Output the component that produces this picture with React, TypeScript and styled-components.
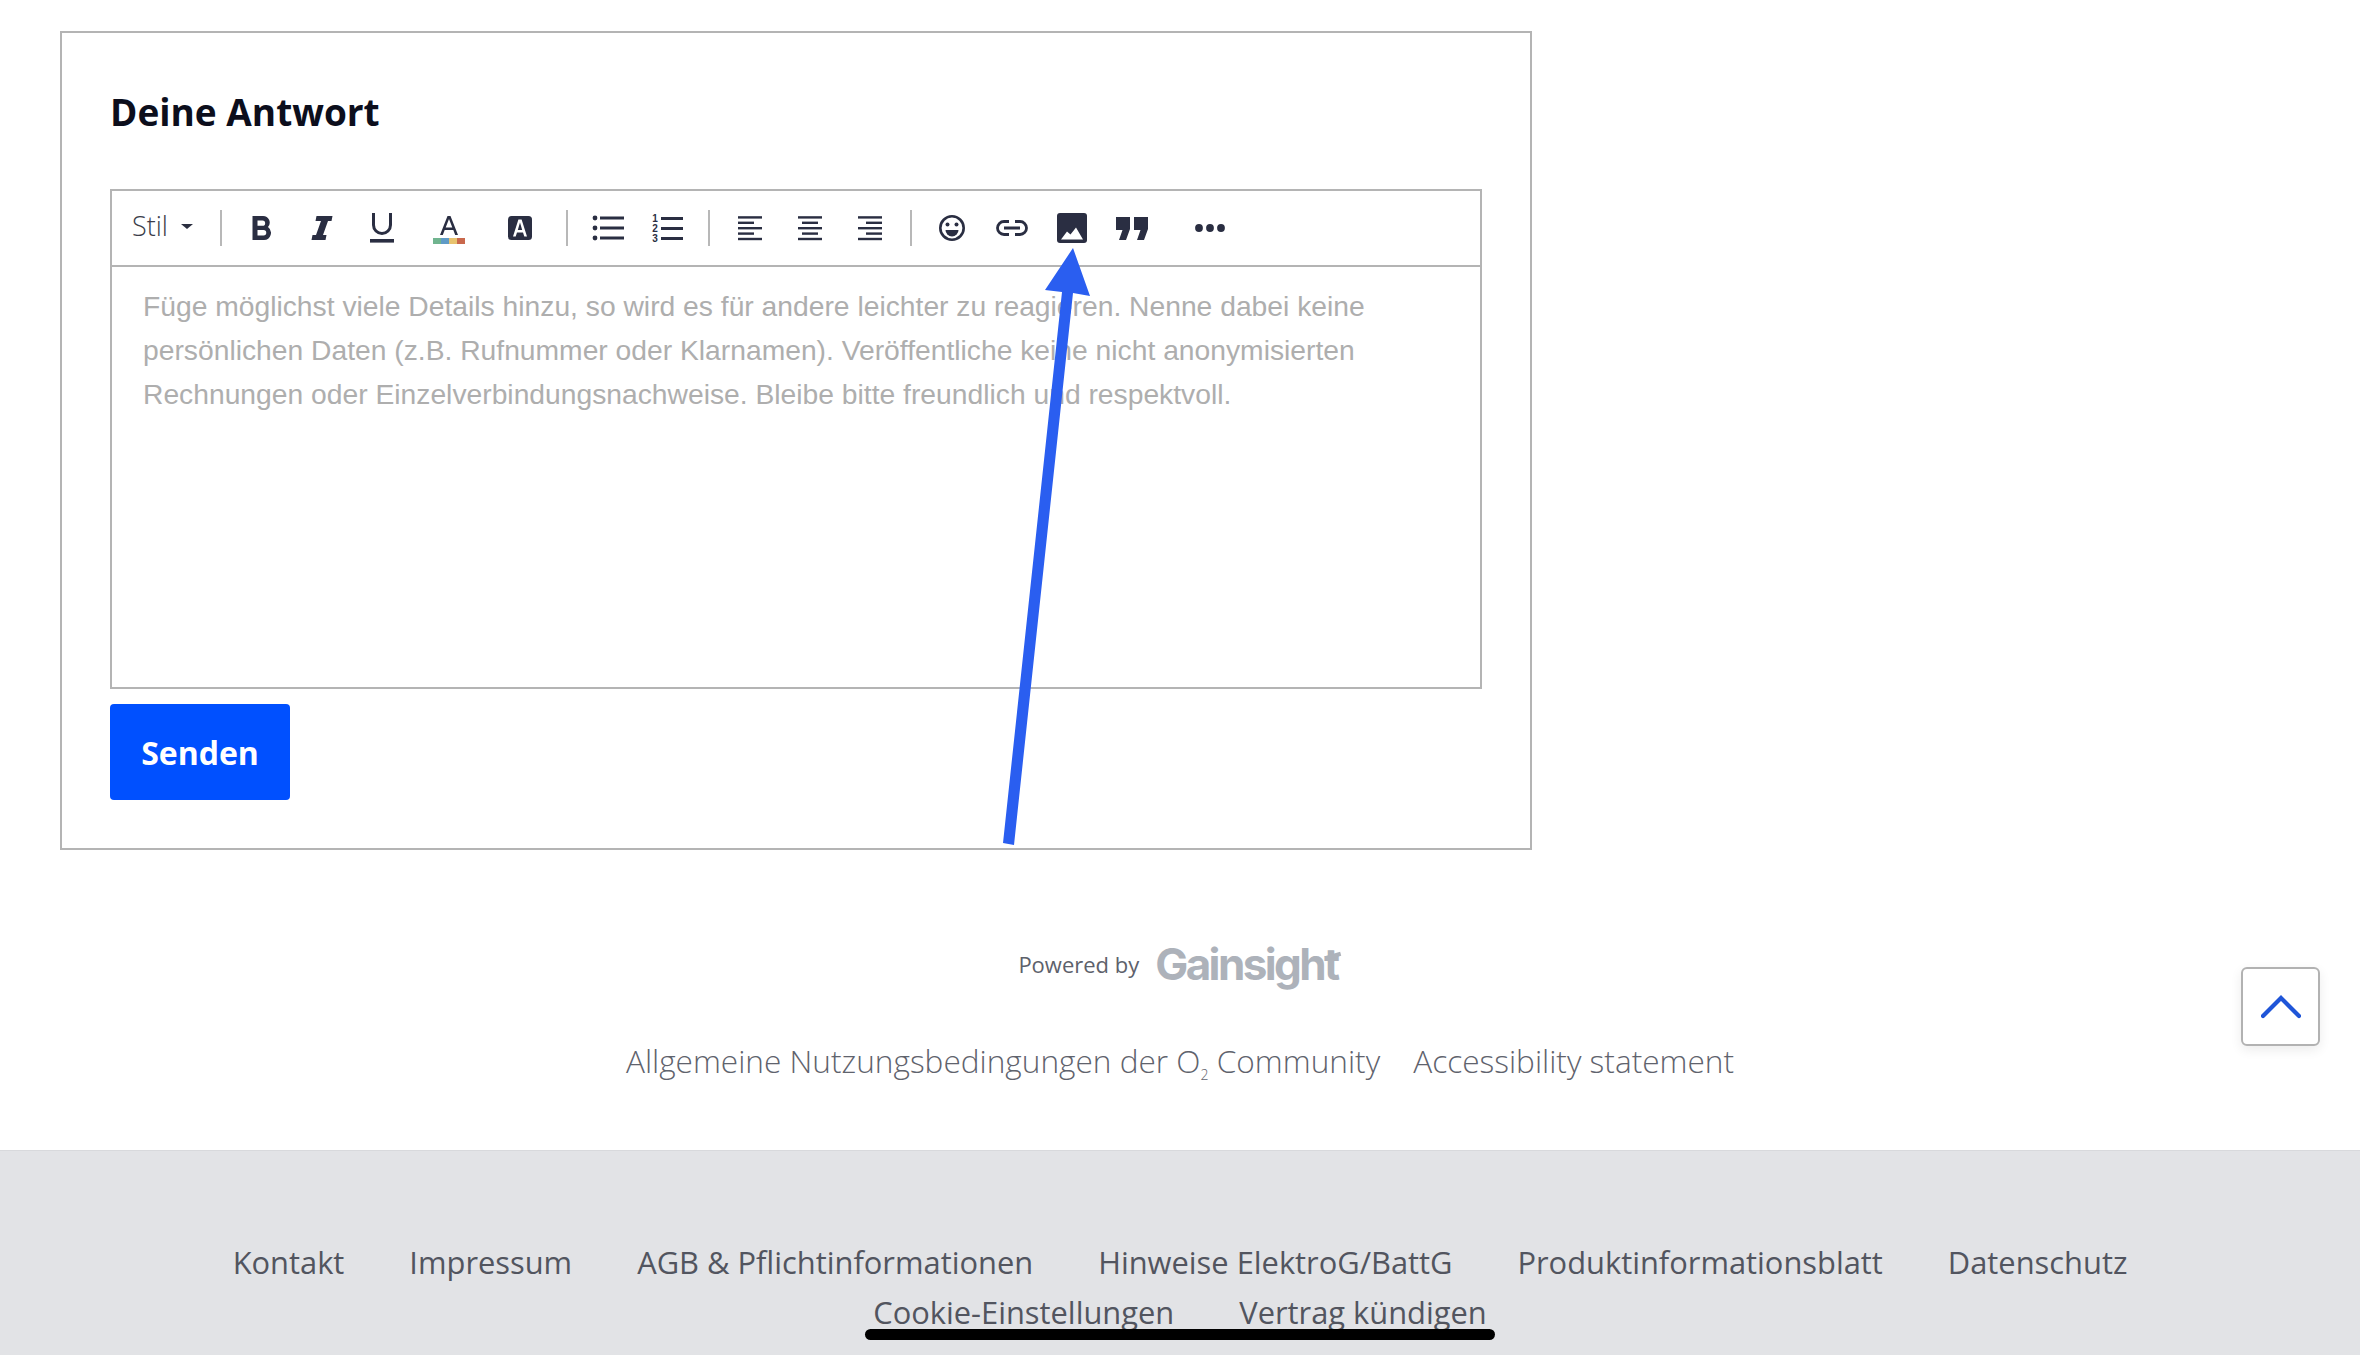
import React from "react";
import styled, { createGlobalStyle } from "styled-components";

const Global = createGlobalStyle`
  html, body { margin: 0; padding: 0; background: #fff; }
  body { width: 2360px; height: 1355px; overflow: hidden; font-family: "Open Sans", "Noto Sans", sans-serif; }
`;

const Page = styled.div`
  position: relative;
  width: 2360px;
  height: 1355px;
  overflow: hidden;
  display: flex;
  flex-direction: column;
`;

const Card = styled.section`
  box-sizing: border-box;
  width: 1472px;
  height: 819px;
  margin: 31px 0 0 60px;
  padding: 0 48px;
  border: 2px solid #b4b4b4;
`;

const Title = styled.h2`
  margin: 0;
  padding-top: 54px;
  height: 156px;
  box-sizing: border-box;
  font-size: 37px;
  line-height: 50px;
  font-weight: 700;
  color: #0c0e1c;
`;

const Editor = styled.div`
  box-sizing: border-box;
  width: 1372px;
  height: 500px;
  border: 2px solid #b4b4b4;
  display: flex;
  flex-direction: column;
`;

const Toolbar = styled.div`
  box-sizing: border-box;
  height: 76px;
  flex: none;
  display: flex;
  align-items: center;
  border-bottom: 2px solid #b4b4b4;
`;

const Style = styled.div`
  box-sizing: border-box;
  width: 108px;
  padding-left: 20px;
  display: flex;
  align-items: center;
  gap: 13px;
  font-size: 27px;
  line-height: 36px;
  font-weight: 300;
  color: #3a3d4a;
  position: relative;
  top: -2px;
`;

const Caret = styled.span`
  width: 0;
  height: 0;
  border-left: 6px solid transparent;
  border-right: 6px solid transparent;
  border-top: 5px solid #2b2f40;
`;

const Sep = styled.span<{ $before?: number; $after?: number }>`
  flex: none;
  width: 2px;
  height: 36px;
  background: #b8b8b8;
  margin-left: ${(p) => p.$before ?? 0}px;
  margin-right: ${(p) => p.$after ?? 9}px;
`;

const Tool = styled.button<{ $w?: number; $before?: number }>`
  flex: none;
  width: ${(p) => p.$w ?? 60}px;
  height: 40px;
  margin-left: ${(p) => p.$before ?? 0}px;
  padding: 0;
  border: 0;
  background: none;
  display: flex;
  align-items: center;
  justify-content: center;
  svg {
    width: 36px;
    height: 36px;
    display: block;
    overflow: visible;
    fill: #2a2e42;
  }
`;

const Placeholder = styled.div`
  padding: 17px 60px 0 31px;
  font-family: "Liberation Sans", Arial, sans-serif;
  font-size: 28.25px;
  line-height: 44.2px;
  color: #aeaeae;
`;

const Send = styled.button`
  display: block;
  box-sizing: border-box;
  width: 180px;
  height: 96px;
  margin-top: 15px;
  border: 0;
  border-radius: 4px;
  background: #0050ff;
  color: #fff;
  font-family: "Open Sans", sans-serif;
  font-size: 32px;
  font-weight: 700;
`;

const Powered = styled.div`
  margin-top: 84px;
  height: 60px;
  display: flex;
  justify-content: center;
  align-items: center;
  gap: 16px;
  padding-right: 4px;
  font-size: 22px;
  color: #5d616b;
`;

const Brand = styled.span`
  position: relative;
  font-family: "Inter", sans-serif;
  font-size: 44px;
  font-weight: 700;
  letter-spacing: -2.6px;
  color: #adb2ba;
  &::after {
    content: "";
    position: absolute;
    right: -3px;
    top: 17px;
    width: 16px;
    height: 4px;
    background: #adb2ba;
    transform: rotate(-16deg);
  }
`;

const Legal = styled.nav`
  margin-top: 45px;
  height: 44px;
  display: flex;
  justify-content: center;
  gap: 33px;
  font-size: 31.6px;
  font-weight: 300;
  line-height: 44px;
  color: #5f636d;
  sub { font-size: 14px; line-height: 0; }
`;

const Footer = styled.footer`
  margin-top: 67px;
  flex: 1;
  box-sizing: border-box;
  padding: 89px 200px 0;
  background: #e2e3e6;
  border-top: 1px solid #d8d9dc;
  display: flex;
  flex-wrap: wrap;
  justify-content: center;
  align-content: flex-start;
  gap: 5px 65px;
  font-size: 30.85px;
  line-height: 45px;
  color: #52555f;
`;

const Top = styled.button`
  position: absolute;
  left: 2241px;
  top: 967px;
  box-sizing: border-box;
  width: 79px;
  height: 79px;
  padding: 0;
  border: 2px solid #b2b2b2;
  border-radius: 6px;
  background: #fff;
  box-shadow: 0 4px 12px rgba(0, 0, 0, 0.08);
  display: flex;
  align-items: center;
  justify-content: center;
`;

const Arrow = styled.svg`
  position: absolute;
  left: 990px;
  top: 240px;
  width: 110px;
  height: 610px;
`;

const HomeBar = styled.div`
  position: absolute;
  left: 865px;
  top: 1329px;
  width: 630px;
  height: 11px;
  border-radius: 6px;
  background: #000;
`;

const Lines = ({ rows }: { rows: [number, number][] }) => (
  <svg viewBox="0 0 36 36">
    {rows.map(([x, w], i) => (
      <rect key={i} x={x} y={6.2 + i * 5.4} width={w} height={2.4} />
    ))}
  </svg>
);

export default function App() {
  return (
    <Page>
      <Global />
      <Card>
        <Title>Deine Antwort</Title>
        <Editor>
          <Toolbar>
            <Style>
              Stil
              <Caret />
            </Style>
            <Sep $after={10} />
            <Tool>
              <svg viewBox="0 0 36 36">
                <path fillRule="evenodd" d="M8.5 6H19a6.6 6.6 0 0 1 5 11A7.2 7.2 0 0 1 20 30H8.5ZM13.5 10.5V15.8H18.5a2.65 2.65 0 0 0 0-5.3ZM13.5 20V25.5H19.5a2.75 2.75 0 0 0 0-5.5Z" />
              </svg>
            </Tool>
            <Tool>
              <svg viewBox="0 0 36 36">
                <path d="M12.5 6H28.5L27.5 11H24L19 25H22.5L21.5 30H7.5L8.5 25H12L17 11H11.5Z" />
              </svg>
            </Tool>
            <Tool>
              <svg viewBox="0 0 36 36">
                <path d="M9.5 3V15a8.5 8.5 0 0 0 17 0V3" fill="none" stroke="#2a2e42" strokeWidth="3" />
                <rect x="6" y="29" width="24" height="3.6" />
              </svg>
            </Tool>
            <Tool $w={74}>
              <svg viewBox="0 0 36 36">
                <path fillRule="evenodd" d="M16.5 6H19.5L27 25H24.2L22.3 20H13.7L11.8 25H9ZM14.7 17.6H21.3L18 9Z" />
                <rect x="2" y="28" width="8" height="6" fill="#70b48f" />
                <rect x="10" y="28" width="8" height="6" fill="#5f9bc6" />
                <rect x="18" y="28" width="8" height="6" fill="#e8c36f" />
                <rect x="26" y="28" width="8" height="6" fill="#c9684c" />
              </svg>
            </Tool>
            <Tool $w={67}>
              <svg viewBox="0 0 36 36">
                <rect x="6" y="6" width="24" height="24" rx="3.5" />
                <path fillRule="evenodd" d="M16.4 9.5H19.6L25 26.5H22.3L21 22.4H15L13.7 26.5H11ZM15.8 20H20.2L18 12.6Z" fill="#fff" />
              </svg>
            </Tool>
            <Sep $before={13} $after={10} />
            <Tool>
              <svg viewBox="0 0 36 36">
                <circle cx="5" cy="8" r="2.4" />
                <circle cx="5" cy="18" r="2.4" />
                <circle cx="5" cy="28" r="2.4" />
                <rect x="10" y="6.5" width="24" height="3" />
                <rect x="10" y="16.5" width="24" height="3" />
                <rect x="10" y="26.5" width="24" height="3" />
              </svg>
            </Tool>
            <Tool>
              <svg viewBox="0 0 36 36">
                <text x="5" y="12" fontSize="10" fontWeight="700" fontFamily="Liberation Sans" textAnchor="middle">1</text>
                <text x="5" y="22" fontSize="10" fontWeight="700" fontFamily="Liberation Sans" textAnchor="middle">2</text>
                <text x="5" y="32" fontSize="10" fontWeight="700" fontFamily="Liberation Sans" textAnchor="middle">3</text>
                <rect x="11" y="7" width="22" height="3" />
                <rect x="11" y="17" width="22" height="3" />
                <rect x="11" y="27" width="22" height="3" />
              </svg>
            </Tool>
            <Sep $before={10} $after={10} />
            <Tool>
              <Lines rows={[[6, 24], [6, 16], [6, 24], [6, 16], [6, 24]]} />
            </Tool>
            <Tool>
              <Lines rows={[[6, 24], [10, 16], [6, 24], [10, 16], [6, 24]]} />
            </Tool>
            <Tool>
              <Lines rows={[[6, 24], [14, 16], [6, 24], [14, 16], [6, 24]]} />
            </Tool>
            <Sep $before={10} $after={10} />
            <Tool>
              <svg viewBox="0 0 36 36">
                <circle cx="18" cy="18" r="11.7" fill="none" stroke="#2a2e42" strokeWidth="2.6" />
                <circle cx="13.5" cy="14.5" r="2" />
                <circle cx="22.5" cy="14.5" r="2" />
                <path d="M11.5 20H24.5a6.5 6.5 0 0 1-13 0Z" />
              </svg>
            </Tool>
            <Tool>
              <svg viewBox="0 0 36 36">
                <path d="M15 11.5H10a6.5 6.5 0 0 0 0 13h5M21 11.5h5a6.5 6.5 0 0 1 0 13h-5M10 18H26" fill="none" stroke="#2a2e42" strokeWidth="2.8" />
              </svg>
            </Tool>
            <Tool>
              <svg viewBox="0 0 36 36">
                <rect x="3" y="3" width="30" height="30" rx="3" />
                <path d="M7 29.5L13 21.5L16.5 24.5L22 17.5L29 29.5Z" fill="#fff" />
              </svg>
            </Tool>
            <Tool>
              <svg viewBox="0 0 36 36">
                <path d="M2 7H16V19L12 30H5L8.5 20H2ZM20 7H34V19L30 30H23L26.5 20H20Z" />
              </svg>
            </Tool>
            <Tool $before={18}>
              <svg viewBox="0 0 36 36">
                <circle cx="7" cy="18" r="3.9" />
                <circle cx="18" cy="18" r="3.9" />
                <circle cx="29" cy="18" r="3.9" />
              </svg>
            </Tool>
          </Toolbar>
          <Placeholder>
            Füge möglichst viele Details hinzu, so wird es für andere leichter zu reagieren. Nenne dabei keine
            persönlichen Daten (z.B. Rufnummer oder Klarnamen). Veröffentliche keine nicht anonymisierten
            Rechnungen oder Einzelverbindungsnachweise. Bleibe bitte freundlich und respektvoll.
          </Placeholder>
        </Editor>
        <Send>Senden</Send>
      </Card>
      <Powered>
        Powered by <Brand>Gainsight</Brand>
      </Powered>
      <Legal>
        <span>
          Allgemeine Nutzungsbedingungen der O<sub>2</sub> Community
        </span>
        <span>Accessibility statement</span>
      </Legal>
      <Footer>
        <span>Kontakt</span>
        <span>Impressum</span>
        <span>AGB &amp; Pflichtinformationen</span>
        <span>Hinweise ElektroG/BattG</span>
        <span>Produktinformationsblatt</span>
        <span>Datenschutz</span>
        <span>Cookie-Einstellungen</span>
        <span>Vertrag kündigen</span>
      </Footer>
      <Top aria-label="Nach oben">
        <svg width="40" height="24" viewBox="0 0 40 24" fill="none" stroke="#1f55d8" strokeWidth="4.2" strokeLinecap="round" strokeLinejoin="miter">
          <path d="M2 21L20 3L38 21" />
        </svg>
      </Top>
      <Arrow viewBox="990 240 110 610">
        <polygon points="1003,843 1014,845 1073,293 1090,296 1073,248 1045,290 1062,292" fill="#2a5ef0" />
      </Arrow>
      <HomeBar />
    </Page>
  );
}
